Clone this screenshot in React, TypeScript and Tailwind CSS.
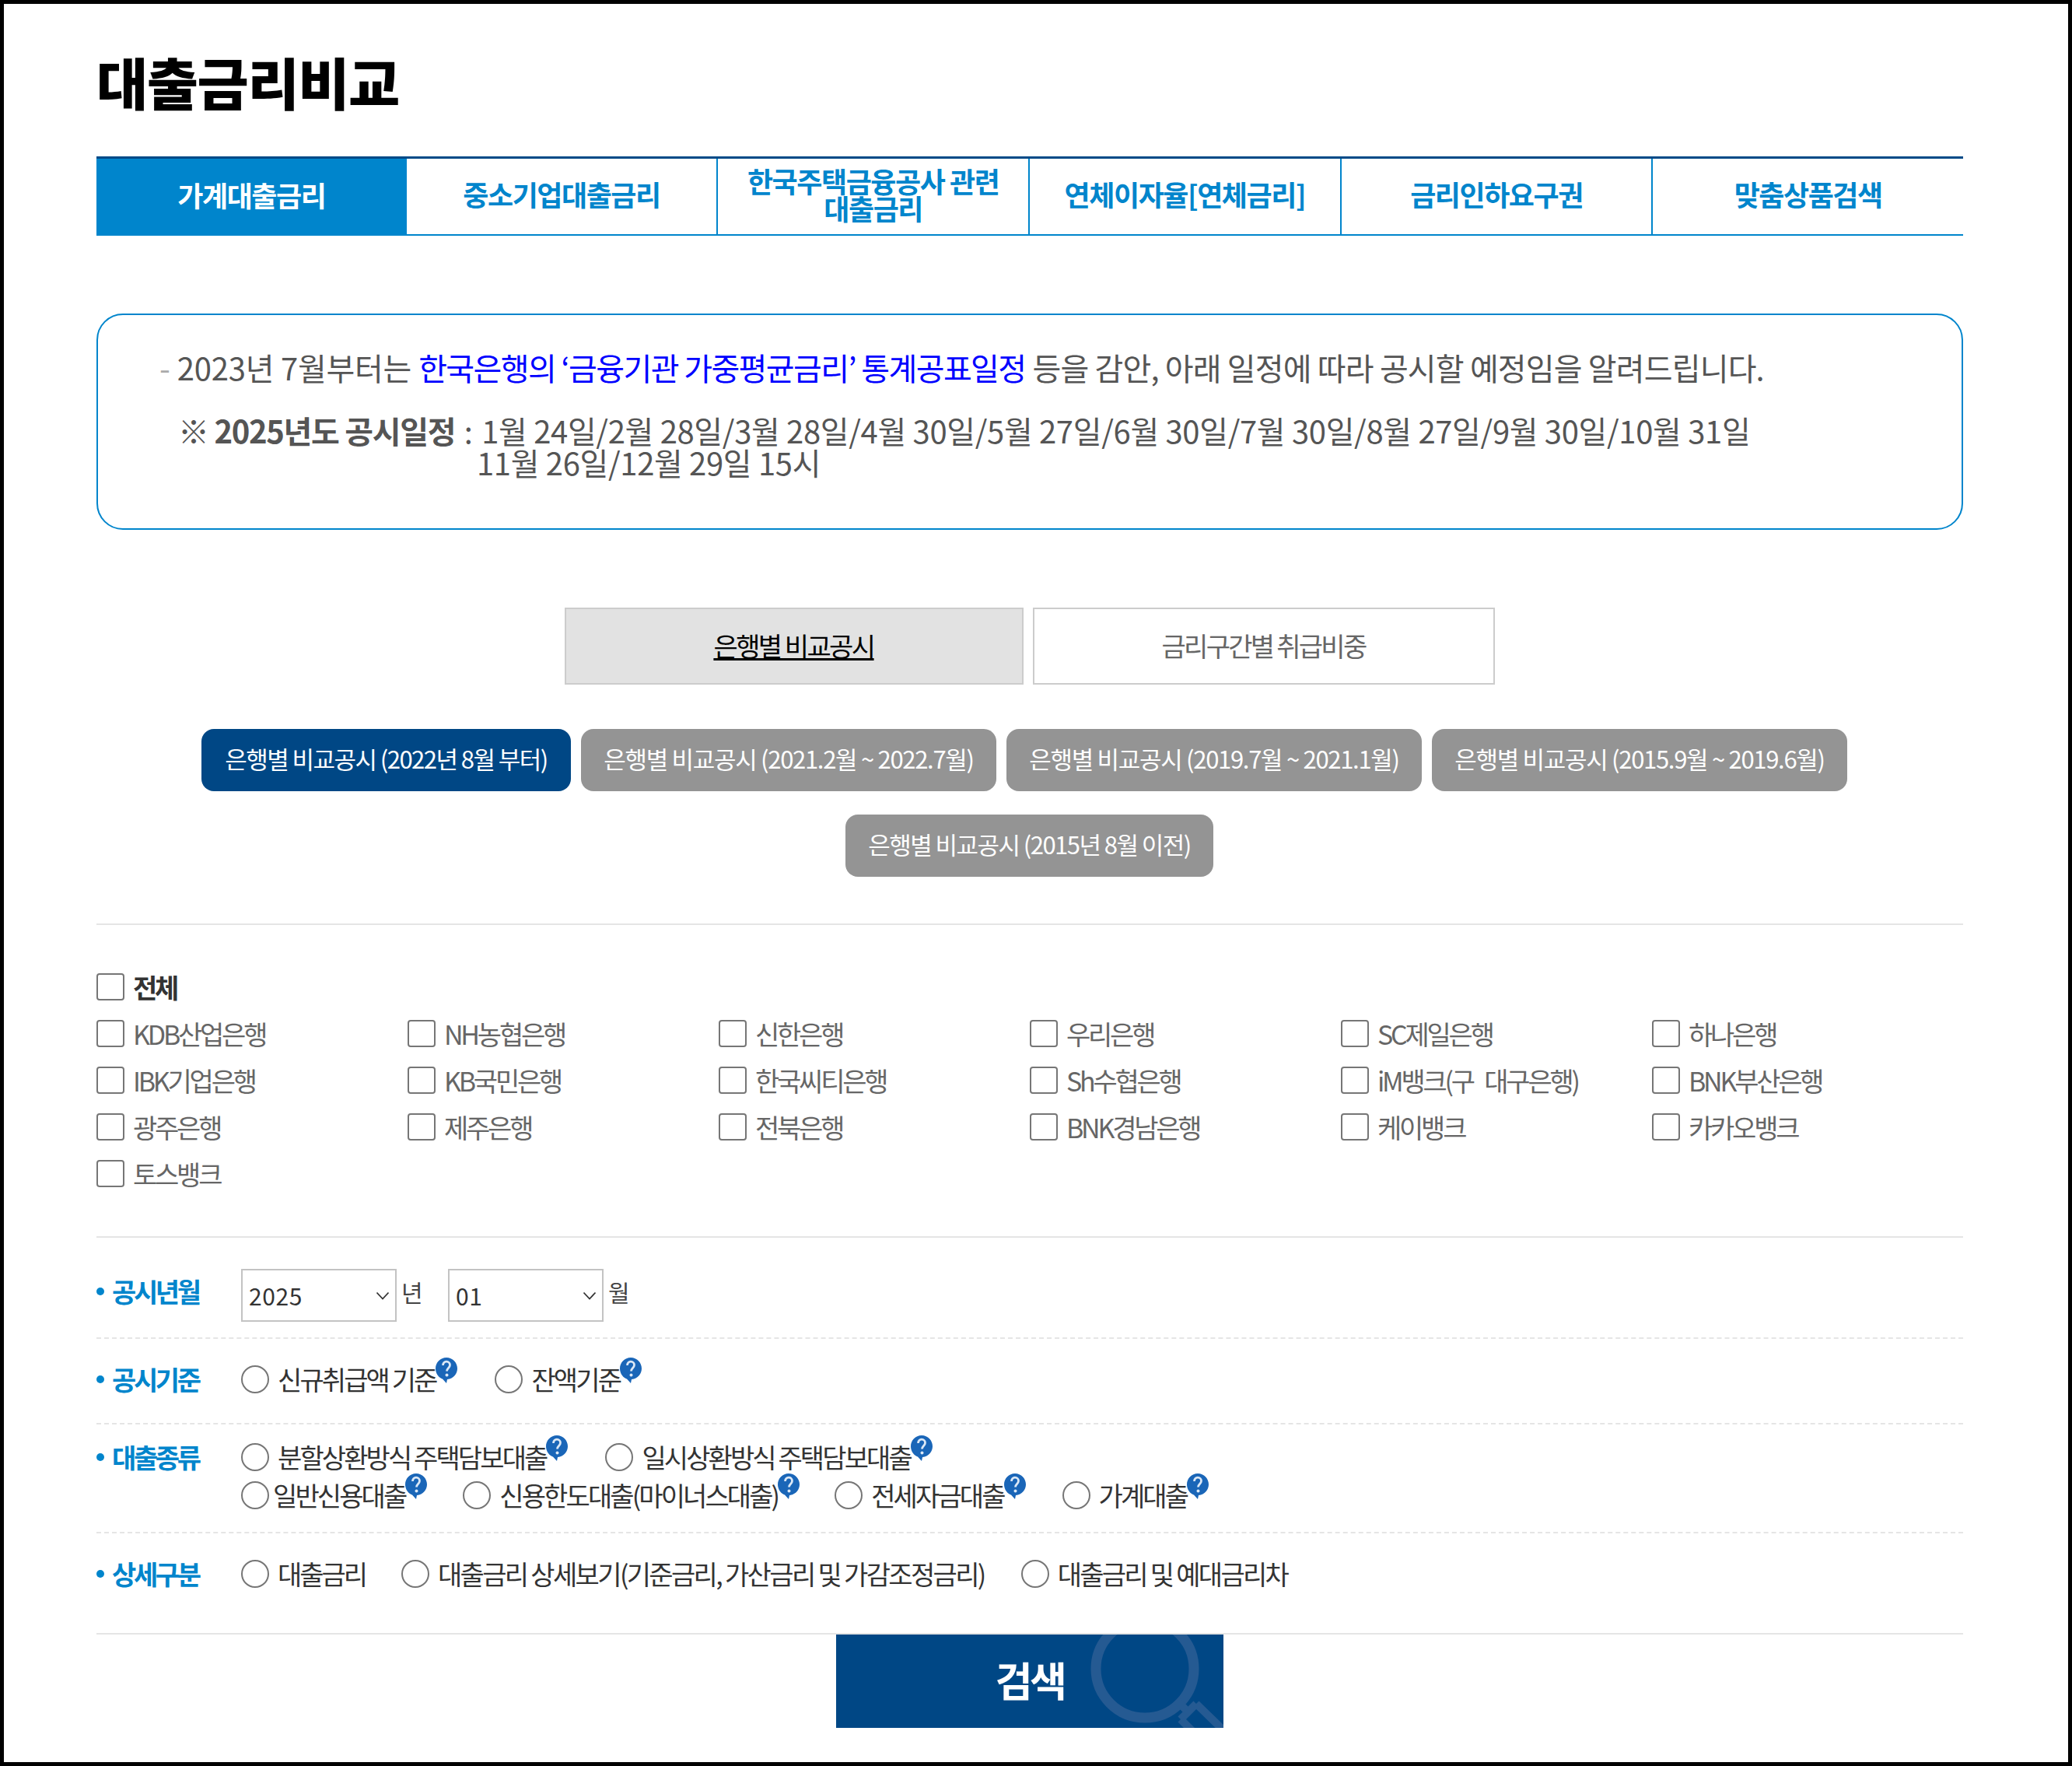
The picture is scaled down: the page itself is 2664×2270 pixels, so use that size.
import React from 'react';

const Q = () => (
  <svg viewBox="0 0 28 33" className="w-[28px] h-[33px] shrink-0 self-start -mt-[10px]">
    <path d="M14 0C6 0 0 6.500 0 14c0 7 4.500 12 9 13.500l5 5.500 1-5C23 27 28 21 28 14 28 6.500 22 0 14 0z" fill="#1a66b8" />
    <path d="M9.500 10c0-3 2-4.800 4.500-4.800s4.500 1.800 4.500 4.300c0 4-4 4-4 8" fill="none" stroke="#dbe8f6" strokeWidth="2.800" />
    <circle cx="14.500" cy="22.500" r="2" fill="#dbe8f6" />
  </svg>
);

const Radio = ({ label, q, gap = 'ml-[11px]', cls = '', track = 'tracking-[-0.085em]' }: { label: string; q?: boolean; gap?: string; cls?: string; track?: string }) => (
  <label className={`flex items-center h-[36px] ${cls}`}>
    <input type="radio" name="r" className="appearance-none w-[36px] h-[36px] rounded-full border-2 border-[#767676] bg-white shrink-0" />
    <span className={`${gap} text-[34px] leading-[36px] ${track} text-[#333] whitespace-nowrap`}>{label}</span>
    {q && <Q />}
  </label>
);

const Check = ({ label, bold }: { label: string; bold?: boolean }) => (
  <label className="flex items-center h-[35px]">
    <input type="checkbox" className="appearance-none w-[36px] h-[35px] rounded-[4px] border-2 border-[#767676] bg-white shrink-0" />
    <span className={`ml-[11px] text-[34px] leading-[35px] tracking-[-0.095em] [word-spacing:10px] whitespace-nowrap ${bold ? 'font-bold text-[#333]' : 'text-[#666]'}`}>{label}</span>
  </label>
);

const RowLabel = ({ t }: { t: string }) => (
  <div className="w-[186px] shrink-0 flex items-center gap-[10px] h-[36px]">
    <span className="w-[10px] h-[10px] rounded-full bg-[#0085cc] shrink-0" />
    <span className="text-[34px] leading-[36px] font-bold tracking-[-0.1em] text-[#0085cc] whitespace-nowrap">{t}</span>
  </div>
);

const Select = ({ v }: { v: string }) => (
  <div className="relative w-[200px] h-[68px] shrink-0">
    <select defaultValue={v} className="appearance-none w-full h-full border-2 border-[#c3c3c3] bg-white pl-[8px] text-[30px] text-[#333] tracking-[0.02em]"><option>{v}</option></select>
    <svg viewBox="0 0 18 11" className="absolute right-[9px] top-[29px] w-[18px] h-[11px] pointer-events-none">
      <path d="M1.500 1.500L9 9.500l7.500-8" fill="none" stroke="#333" strokeWidth="1.800" />
    </svg>
  </div>
);

const tabs = ['가계대출금리', '중소기업대출금리', '한국주택금융공사 관련\n대출금리', '연체이자율[연체금리]', '금리인하요구권', '맞춤상품검색'];
const banks = ['KDB산업은행', 'NH농협은행', '신한은행', '우리은행', 'SC제일은행', '하나은행', 'IBK기업은행', 'KB국민은행', '한국씨티은행', 'Sh수협은행', 'iM뱅크(구 대구은행)', 'BNK부산은행', '광주은행', '제주은행', '전북은행', 'BNK경남은행', '케이뱅크', '카카오뱅크', '토스뱅크'];

const Pill = ({ t, w, on, track = 'tracking-[-0.045em]' }: { t: string; w: string; on?: boolean; track?: string }) => (
  <a className={`${w} h-[80px] pb-[3px] rounded-[16px] flex items-center justify-center text-white text-[31px] ${track} whitespace-nowrap ${on ? 'bg-[#004785]' : 'bg-[#949494]'}`}>{t}</a>
);

export default function App() {
  return (
    <div className="w-[2664px] h-[2270px] border-[5px] border-black bg-white pl-[119px] pr-[135px] font-['Noto_Sans_CJK_KR','Noto_Sans',sans-serif] overflow-hidden">
      <h1 className="h-[196px] pt-[49px] text-[72px] leading-[100px] font-black tracking-[-0.02em] text-black">대출금리비교</h1>

      <div className="flex h-[102px] border-t-[3px] border-t-[#004a87] border-b-2 border-b-[#0085cc]">
        {tabs.map((t, i) => (
          <div key={t} className={`flex-1 flex items-center justify-center pb-[6px] text-center whitespace-pre-line text-[36px] leading-[35px] font-bold tracking-[-0.04em] ${i === 0 ? 'bg-[#0085cc] text-white' : 'text-[#0085cc]'} ${i > 0 && i < 5 ? 'border-r-2 border-r-[#0085cc]' : ''} ${i === 0 ? '-mb-[2px]' : ''}`}>{t}</div>
        ))}
      </div>

      <div className="mt-[100px] h-[278px] border-2 border-[#0085cc] rounded-[34px] pl-[79px] pt-[41px] text-[40px] text-[#555]">
        <p className="leading-[52px] whitespace-nowrap"><span className="text-[#aaa]">-</span> <span className="tracking-[-0.006em]">2023년 7월부터는</span> <span className="text-[#0000ff] tracking-[-0.04em]">한국은행의 ‘금융기관 가중평균금리’ 통계공표일정</span> <span className="tracking-[-0.021em]">등을 감안, 아래 일정에 따라 공시할 예정임을 알려드립니다.</span></p>
        <div className="mt-[35px] ml-[24px] leading-[41px] whitespace-nowrap tracking-[-0.0085em]">
          <p><b className="tracking-[-0.033em] mr-[3px]">※ 2025년도 공시일정</b> : <span className="ml-[3px]">1월 24일/2월 28일/3월 28일/4월 30일/5월 27일/6월 30일/7월 30일/8월 27일/9월 30일/10월 31일</span></p>
          <p className="pl-[384px]">11월 26일/12월 29일 15시</p>
        </div>
      </div>

      <div className="mt-[100px] flex justify-center gap-[12px] pr-[1px] text-[34px]">
        <a className="w-[590px] h-[99px] pb-[2px] border-2 border-[#ccc] bg-[#e2e2e2] text-black underline tracking-[-0.075em] flex items-center justify-center">은행별 비교공시</a>
        <a className="w-[594px] h-[99px] pb-[2px] border-2 border-[#ccc] text-[#666] tracking-[-0.08em] flex items-center justify-center">금리구간별 취급비중</a>
      </div>

      <div className="mt-[57px] flex justify-center gap-[13px] pr-[14px]">
        <Pill on w="w-[475px]" track="tracking-[-0.05em]" t="은행별 비교공시 (2022년 8월 부터)" />
        <Pill w="w-[534px]" track="tracking-[-0.042em]" t="은행별 비교공시 (2021.2월 ~ 2022.7월)" />
        <Pill w="w-[534px]" track="tracking-[-0.042em]" t="은행별 비교공시 (2019.7월 ~ 2021.1월)" />
        <Pill w="w-[534px]" track="tracking-[-0.042em]" t="은행별 비교공시 (2015.9월 ~ 2019.6월)" />
      </div>
      <div className="mt-[30px] flex justify-center pr-[1px]">
        <Pill w="w-[473px]" track="tracking-[-0.05em]" t="은행별 비교공시 (2015년 8월 이전)" />
      </div>

      <div className="mt-[60px] border-t-2 border-[#e5e5e5] pt-[62px] h-[402px]">
        <Check bold label="전체" />
        <div className="mt-[25px] grid grid-cols-6 gap-y-[25px]">
          {banks.map(b => <Check key={b} label={b} />)}
        </div>
      </div>

      <div className="border-t-2 border-[#e5e5e5]">
        <div className="h-[130px] border-b-2 border-dashed border-[#e5e5e5] flex items-start pt-[40px]">
          <div className="w-[186px] pt-[11px]"><RowLabel t="공시년월" /></div>
          <Select v="2025" />
          <span className="ml-[6px] text-[30px] leading-[58px] text-[#444] w-[60px]">년</span>
          <Select v="01" />
          <span className="ml-[6px] text-[30px] leading-[58px] text-[#444]">월</span>
        </div>
        <div className="h-[110px] border-b-2 border-dashed border-[#e5e5e5] flex items-start pt-[34px]">
          <RowLabel t="공시기준" />
          <Radio q label="신규취급액 기준" />
          <Radio q label="잔액기준" cls="ml-[48px]" />
        </div>
        <div className="h-[140px] border-b-2 border-dashed border-[#e5e5e5] flex items-start pt-[24px]">
          <RowLabel t="대출종류" />
          <div className="flex flex-col gap-[13px]">
            <div className="flex">
              <Radio q label="분할상환방식 주택담보대출" />
              <Radio q label="일시상환방식 주택담보대출" cls="ml-[48px]" />
            </div>
            <div className="flex">
              <Radio q label="일반신용대출" gap="ml-[5px]" />
              <Radio q label="신용한도대출(마이너스대출)" cls="ml-[46px]" />
              <Radio q label="전세자금대출" cls="ml-[45px]" />
              <Radio q label="가계대출" cls="ml-[47px]" />
            </div>
          </div>
        </div>
        <div className="h-[130px] border-b-2 border-[#e5e5e5] flex items-start pt-[34px]">
          <RowLabel t="상세구분" />
          <Radio label="대출금리" track="tracking-[-0.09em]" />
          <Radio label="대출금리 상세보기(기준금리, 가산금리 및 가감조정금리)" track="tracking-[-0.078em]" cls="ml-[46px]" />
          <Radio label="대출금리 및 예대금리차" track="tracking-[-0.08em]" cls="ml-[47px]" />
        </div>
      </div>

      <div className="flex justify-center">
        <button className="relative w-[498px] h-[120px] pb-[4px] bg-[#004785] overflow-hidden text-white text-[52px] font-bold tracking-[-0.07em]">
          <svg viewBox="0 0 498 120" className="absolute inset-0 w-full h-full">
            <circle cx="397" cy="44" r="63" fill="none" stroke="#255a92" strokeWidth="13" />
            <path d="M438 85l12 12M463 89l-20 20M463 89l37 36M443 109l26 26" fill="none" stroke="#255a92" strokeWidth="10" />
          </svg>
          <span className="relative">검색</span>
        </button>
      </div>
    </div>
  );
}
